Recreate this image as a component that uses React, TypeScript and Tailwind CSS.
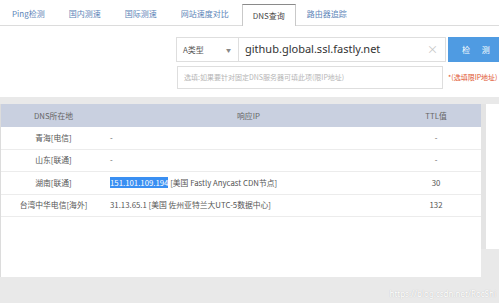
const font = { fontFamily: '"Noto Sans", "Noto Sans CJK SC", sans-serif' };

const tabs = ["Ping检测", "国内测速", "国际测速", "网站速度对比", "DNS查询", "路由器追踪"];

const rows = [
  { loc: "青海[电信]", ip: "-", ttl: "-" },
  { loc: "山东[联通]", ip: "-", ttl: "-" },
  { loc: "湖南[联通]", ip: "151.101.109.194", info: " [美国 Fastly Anycast CDN节点]", ttl: "30", sel: true },
  { loc: "台湾中华电信[海外]", ip: "31.13.65.1", info: " [美国 佐州亚特兰大UTC-5数据中心]", ttl: "132" },
];

export default function App() {
  return (
    <div
      className="w-[499px] h-[303px] overflow-hidden bg-[#e9e9e9] relative"
      style={{ fontFamily: '"Noto Sans CJK SC", "Noto Sans", sans-serif' }}
    >
      <div className="bg-white h-[97px] flex flex-col">
        <div className="flex items-end h-[26px] border-b border-[#dcdcdc] pl-[1px]">
          {tabs.map((t) => {
            const active = t === "DNS查询";
            return (
              <div
                key={t}
                className={
                  active
                    ? "h-[22px] -mb-px px-[10px] bg-white border-x border-t border-[#c9c9c9] border-t-[#8a8a8a] flex items-center text-[8px] text-[#4a4a4a]"
                    : "h-[22px] px-[10px] mr-[2px] flex items-center text-[8px] text-[#5b84b8]"
                }
              >
                <span className={active ? "" : "px-[1px]"}>{t}</span>
              </div>
            );
          })}
        </div>

        <div className="flex mt-[11px] ml-[176px] h-[25px]">
          <div className="w-[63px] border border-[#dedede] flex items-center justify-between pl-[6px] pr-[7px] text-[8px] text-[#555]">
            <span>A类型</span>
            <span className="text-[5px] text-[#888]">▼</span>
          </div>
          <div className="w-[207px] border border-l-0 border-[#dedede] flex items-center justify-between pl-[6px] pr-[7px]">
            <span className="text-[11px] text-[#333]" style={font}>
              github.global.ssl.fastly.net
            </span>
            <span className="text-[11px] text-[#c6c6c6] leading-none">×</span>
          </div>
          <div className="ml-[2px] flex-1 bg-[#4f9be2] text-white text-[8px] flex items-center pl-[14px] tracking-[5px]">
            检 测
          </div>
        </div>

        <div className="flex items-center mt-[4px] ml-[177px] h-[23px]">
          <div className="w-[266px] h-full border border-[#dedede] flex items-center pl-[6px] text-[7px] text-[#b5b5b5]">
            选填:如果要针对固定DNS服务器可填此项(限IP地址)
          </div>
          <span className="ml-[5px] text-[7px] text-[#e0552f] whitespace-nowrap">*(选填限IP地址)</span>
        </div>
      </div>

      <div className="flex mt-[7px]">
        <div className="w-[481px] h-[173px] bg-white border-l border-[#dcdcdc]">
          <div className="flex h-[23px] bg-[#c9d0e0] text-[7.8px] text-[#666] items-center">
            <div className="w-[105px] text-center">DNS所在地</div>
            <div className="w-[285px] text-center">响应IP</div>
            <div className="flex-1 text-center">TTL值</div>
          </div>
          {rows.map((r) => (
            <div key={r.loc} className="flex h-[22.5px] items-center border-b border-[#ececec] text-[7.8px] text-[#555]">
              <div className="w-[105px] text-center">{r.loc}</div>
              <div className="w-[285px] pl-[4px] whitespace-nowrap">
                <span className={r.sel ? "bg-[#3a8ff2] text-white" : ""}>{r.ip}</span>
                {r.info}
              </div>
              <div className="flex-1 text-center">{r.ttl}</div>
            </div>
          ))}
        </div>
        <div className="w-[5px] h-[145px] bg-[#e4e4e4]" />
        <div className="flex-1 h-[145px] bg-white" />
      </div>

      <div
        className="absolute right-[3px] bottom-[3px] text-[8px] text-white"
        style={{ ...font, textShadow: "0 0 1px rgba(0,0,0,0.25)" }}
      >
        https://blog.csdn.net/RocShi
      </div>
    </div>
  );
}
